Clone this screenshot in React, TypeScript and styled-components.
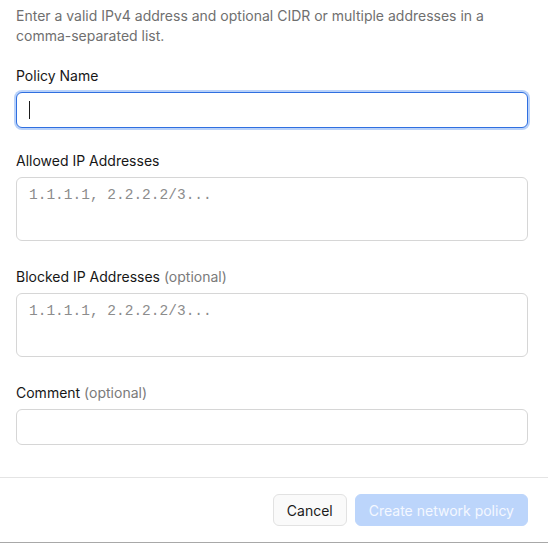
import React from "react";
import styled, { createGlobalStyle } from "styled-components";

const GlobalStyle = createGlobalStyle`
  html, body {
    margin: 0;
    padding: 0;
    background: #ffffff;
  }
  body {
    font-family: Inter, "Noto Sans", sans-serif;
    -webkit-font-smoothing: antialiased;
  }
  * {
    box-sizing: border-box;
  }
`;

const Dialog = styled.div`
  width: 548px;
  height: 543px;
  display: flex;
  flex-direction: column;
  border-bottom: 1px solid #a8a8a8;
`;

const Body = styled.div`
  padding: 6px 20px 0 16px;
  display: flex;
  flex-direction: column;
`;

const Description = styled.p`
  margin: 0 0 20px;
  font-size: 14px;
  line-height: 20px;
  color: #6f6f6f;
`;

const Field = styled.div<{ $gap: number }>`
  display: flex;
  flex-direction: column;
  gap: 6px;
  margin-bottom: ${(p) => p.$gap}px;
`;

const Label = styled.label`
  font-size: 14px;
  line-height: 20px;
  font-weight: 400;
  color: #171717;
`;

const Optional = styled.span`
  color: #7a7a7a;
`;

const Input = styled.input`
  display: block;
  width: 100%;
  height: 36px;
  padding: 0 12px;
  border-radius: 6px;
  border: 1px solid #d6d6d6;
  font-family: Inter, "Noto Sans", sans-serif;
  font-size: 14px;
  color: #1c1c1c;
  background: #ffffff;
  outline: none;
`;

const FocusedInput = styled.div`
  display: flex;
  align-items: center;
  width: 100%;
  height: 36px;
  padding: 0 12px;
  border-radius: 6px;
  border: 1px solid #2f6fe0;
  box-shadow: 0 0 0 2px #b9d2fa;
  background: #ffffff;
`;

const Caret = styled.span`
  display: inline-block;
  width: 1px;
  height: 18px;
  background: #1c1c1c;
`;

const TextArea = styled.textarea`
  display: block;
  width: 100%;
  height: 64px;
  padding: 7px 12px;
  border-radius: 6px;
  border: 1px solid #d6d6d6;
  font-family: "Liberation Mono", "DejaVu Sans Mono", monospace;
  font-size: 14.5px;
  line-height: 20px;
  color: #1c1c1c;
  resize: none;
  outline: none;

  &::placeholder {
    color: #8c8c8c;
  }
`;

const Footer = styled.div`
  margin-top: auto;
  border-top: 1px solid #e4e4e4;
  padding: 16px 20px 16px 16px;
  display: flex;
  justify-content: flex-end;
  gap: 8px;
`;

const Button = styled.button<{ $primary?: boolean }>`
  height: 32px;
  padding: 0 13px;
  border-radius: 6px;
  font-family: Inter, "Noto Sans", sans-serif;
  font-size: 14px;
  font-weight: 400;
  border: 1px solid ${(p) => (p.$primary ? "#bcd5fb" : "#e2e2e2")};
  background: ${(p) => (p.$primary ? "#bcd5fb" : "#fafafa")};
  color: ${(p) => (p.$primary ? "#f4f8ff" : "#1c1c1c")};
  cursor: ${(p) => (p.$primary ? "not-allowed" : "pointer")};
`;

const App: React.FC = () => {
  return (
    <>
      <GlobalStyle />
      <Dialog>
        <Body>
          <Description>
            Enter a valid IPv4 address and optional CIDR or multiple addresses
            in a comma-separated list.
          </Description>

          <Field $gap={23}>
            <Label>Policy Name</Label>
            <FocusedInput>
              <Caret />
            </FocusedInput>
          </Field>

          <Field $gap={26}>
            <Label>Allowed IP Addresses</Label>
            <TextArea placeholder="1.1.1.1, 2.2.2.2/3..." />
          </Field>

          <Field $gap={26}>
            <Label>
              Blocked IP Addresses <Optional>(optional)</Optional>
            </Label>
            <TextArea placeholder="1.1.1.1, 2.2.2.2/3..." />
          </Field>

          <Field $gap={0}>
            <Label>
              Comment <Optional>(optional)</Optional>
            </Label>
            <Input />
          </Field>
        </Body>

        <Footer>
          <Button>Cancel</Button>
          <Button $primary disabled>
            Create network policy
          </Button>
        </Footer>
      </Dialog>
    </>
  );
};

export default App;
